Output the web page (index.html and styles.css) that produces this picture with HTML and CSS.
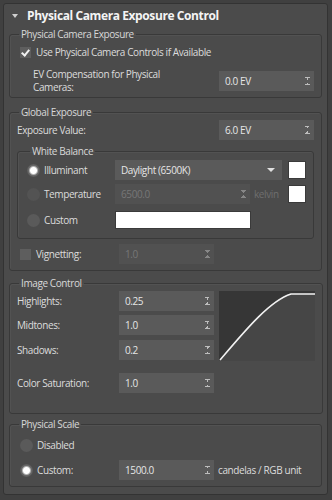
FILE: index.html
```html
<!DOCTYPE html>
<html>
<head>
    <title>Physical Camera Exposure Control</title>
    <link rel="stylesheet" href="styles.css">
</head>
<body>
    <div class="rollout">
        <div class="rollout-head">
            <span class="caret"></span>
            <span class="rollout-title">Physical Camera Exposure Control</span>
            <span class="grip"></span>
        </div>

        <div class="rollout-body">
            <!-- Physical Camera Exposure -->
            <fieldset class="group g1">
                <legend>Physical Camera Exposure</legend>
                <div class="row check-row">
                    <span class="checkbox checked"></span>
                    <span>Use Physical Camera Controls if Available</span>
                </div>
                <div class="row split ev-row">
                    <span class="two-line">EV Compensation for Physical<br>Cameras:</span>
                    <div class="spinner">0.0 EV<span class="arrows"></span></div>
                </div>
            </fieldset>

            <!-- Global Exposure -->
            <fieldset class="group g2">
                <legend>Global Exposure</legend>
                <div class="row split exp-row">
                    <span>Exposure Value:</span>
                    <div class="spinner">6.0 EV<span class="arrows"></span></div>
                </div>

                <fieldset class="group wb">
                    <legend>White Balance</legend>
                    <div class="row wb-row r1">
                        <span class="radio-label"><span class="radio on"></span>Illuminant</span>
                        <div class="dropdown">Daylight (6500K)<span class="drop-arrow"></span></div>
                        <span class="swatch"></span>
                    </div>
                    <div class="row wb-row r2">
                        <span class="radio-label"><span class="radio off"></span>Temperature</span>
                        <div class="spinner disabled temp">6500.0<span class="arrows"></span></div>
                        <span class="unit dim">kelvin</span>
                        <span class="swatch"></span>
                    </div>
                    <div class="row wb-row r3">
                        <span class="radio-label"><span class="radio"></span>Custom</span>
                        <span class="color-field"></span>
                    </div>
                </fieldset>

                <div class="row vig-row">
                    <span class="check-label"><span class="checkbox"></span>Vignetting:</span>
                    <div class="spinner small disabled">1.0<span class="arrows"></span></div>
                </div>
            </fieldset>

            <!-- Image Control -->
            <fieldset class="group g3">
                <legend>Image Control</legend>
                <div class="curve-block">
                    <div class="curve-rows">
                        <div class="row">
                            <span class="label">Highlights:</span>
                            <div class="spinner small">0.25<span class="arrows"></span></div>
                        </div>
                        <div class="row">
                            <span class="label">Midtones:</span>
                            <div class="spinner small">1.0<span class="arrows"></span></div>
                        </div>
                        <div class="row shadows">
                            <span class="label">Shadows:</span>
                            <div class="spinner small">0.2<span class="arrows"></span></div>
                        </div>
                    </div>
                    <svg class="curve" width="96" height="70" viewBox="0 0 96 70">
                        <rect x="0" y="0" width="96" height="70" fill="#464646"/>
                        <path d="M0 0 L96 0 L96 3 L72 3 C50 10 24 42 1 69 L0 69 Z" fill="#363636"/>
                        <path d="M1 69 C24 42 50 10 72 3 L96 3" fill="none" stroke="#f2f2f2" stroke-width="1.6"/>
                    </svg>
                </div>
                <div class="row sat-row">
                    <span class="label">Color Saturation:</span>
                    <div class="spinner small">1.0<span class="arrows"></span></div>
                </div>
            </fieldset>

            <!-- Physical Scale -->
            <fieldset class="group g4">
                <legend>Physical Scale</legend>
                <div class="row ps-row">
                    <span class="radio-label"><span class="radio"></span>Disabled</span>
                </div>
                <div class="row ps-row r2">
                    <span class="radio-label"><span class="radio on"></span>Custom:</span>
                    <div class="spinner small">1500.0<span class="arrows"></span></div>
                    <span class="unit">candelas / RGB unit</span>
                </div>
            </fieldset>
        </div>
    </div>
</body>
</html>
```

FILE: styles.css
```css
body {
    margin: 0;
    padding: 3px 4px 0 3px;
    background: #404040;
    font-family: 'Open Sans', sans-serif;
    font-size: 10px;
    letter-spacing: -0.4px;
    color: #dcdcdc;
}
.rollout {
    background: #4b4b4b;
    border: 1px solid #333333;
    border-radius: 3px;
    height: 492px;
    box-sizing: border-box;
}
.rollout-head {
    height: 23px;
    display: flex;
    align-items: center;
    padding: 0 9px 0 8px;
}
.caret {
    width: 0;
    height: 0;
    border-left: 3px solid transparent;
    border-right: 3px solid transparent;
    border-top: 4px solid #cfcfcf;
    margin-right: 9px;
}
.rollout-title {
    flex: 1;
    font-weight: bold;
    font-size: 12px;
    letter-spacing: -0.4px;
    color: #f4f4f4;
}
.grip {
    width: 6px;
    height: 6px;
    background-image: radial-gradient(#6c6c6c 45%, transparent 50%);
    background-size: 2px 2px;
    margin-top: 2px;
}
.rollout-body {
    padding: 0 5px;
}
.group {
    margin: 0;
    border: 1px solid #393939;
    border-radius: 3px;
    padding: 0 7px;
    box-shadow: inset 1px 1px 0 #525252;
}
.group legend {
    padding: 0 2px;
    margin-left: 2px;
    line-height: 14px;
    color: #d8d8d8;
}
.row {
    display: flex;
    align-items: center;
    height: 20px;
    white-space: nowrap;
}
.split {
    justify-content: space-between;
}
.check-row {
    height: 22px;
    padding-left: 3px;
}
.checkbox {
    position: relative;
    width: 11px;
    height: 11px;
    background: #5e5e5e;
    margin-right: 5px;
    flex: none;
}
.checkbox.checked::after {
    content: '';
    position: absolute;
    left: 3px;
    top: 1px;
    width: 3px;
    height: 6px;
    border-right: 2px solid #f2f2f2;
    border-bottom: 2px solid #f2f2f2;
    transform: rotate(40deg);
}
.ev-row {
    margin-top: 8px;
}
.two-line {
    padding-left: 16px;
    line-height: 13px;
}
.g1 {
    padding-bottom: 6px;
}
.spinner {
    position: relative;
    width: 95px;
    height: 20px;
    box-sizing: border-box;
    background: #5a5a5a;
    padding-left: 6px;
    line-height: 20px;
    color: #e6e6e6;
    flex: none;
}
.spinner.disabled {
    background: #515151;
    color: #777777;
}
.arrows {
    position: absolute;
    right: 4px;
    top: 6px;
    width: 5px;
    height: 8px;
    background:
        linear-gradient(to top right, transparent 50%, #bdbdbd 50%) 0 0 / 3px 3px no-repeat,
        linear-gradient(to top left, transparent 50%, #bdbdbd 50%) 2px 0 / 3px 3px no-repeat,
        linear-gradient(to bottom right, transparent 50%, #bdbdbd 50%) 0 5px / 3px 3px no-repeat,
        linear-gradient(to bottom left, transparent 50%, #bdbdbd 50%) 2px 5px / 3px 3px no-repeat;
}
.disabled .arrows {
    opacity: 0.5;
}
.g2 {
    margin-top: 7px;
    padding-bottom: 6px;
}
.exp-row {
    margin-top: 1px;
}
.wb {
    margin-top: 4px;
    padding: 0 7px 8px 9px;
}
.wb legend {
    margin-left: 3px;
}
.r1 {
    margin-top: 2px;
}
.wb-row.r2 {
    margin-top: 4px;
}
.wb-row.r3 {
    margin-top: 6px;
}
.radio-label {
    display: flex;
    align-items: center;
    width: 88px;
    flex: none;
}
.radio {
    width: 13px;
    height: 13px;
    border-radius: 50%;
    background: #5a5a5a;
    margin-right: 4px;
    flex: none;
}
.radio.off {
    background: #535353;
}
.radio.on {
    background: radial-gradient(circle, #ffffff 0 3px, #d9d9d9 3.5px, #6a6a6a 5px, #5a5a5a 6.5px);
}
.dropdown {
    position: relative;
    width: 167px;
    height: 20px;
    box-sizing: border-box;
    background: #5a5a5a;
    padding-left: 6px;
    line-height: 20px;
    color: #e6e6e6;
    flex: none;
}
.drop-arrow {
    position: absolute;
    right: 7px;
    top: 8px;
    border-left: 4px solid transparent;
    border-right: 4px solid transparent;
    border-top: 4px solid #e0e0e0;
}
.swatch {
    width: 18px;
    height: 18px;
    background: #ffffff;
    border: 1px solid #3a3a3a;
    box-sizing: border-box;
    margin-left: 6px;
    flex: none;
}
.spinner.temp {
    width: 135px;
}
.unit {
    margin-left: 4px;
}
.dim {
    color: #6f6f6f;
}
.wb-row .unit {
    width: 28px;
}
.color-field {
    width: 136px;
    height: 18px;
    background: #ffffff;
    border: 1px solid #3a3a3a;
    box-sizing: border-box;
}
.vig-row {
    margin-top: 5px;
}
.check-label {
    display: flex;
    align-items: center;
    width: 102px;
    padding-left: 3px;
    box-sizing: border-box;
    flex: none;
}
.spinner.small {
    width: 95px;
}
.g3 {
    margin-top: 5px;
    padding-bottom: 20px;
}
.curve-block {
    display: flex;
    margin-top: 1px;
}
.curve-rows {
    display: flex;
    flex-direction: column;
    gap: 4px;
}
.curve-rows .shadows {
    margin-top: 1px;
}
.label {
    width: 102px;
    flex: none;
}
.curve {
    margin-left: 5px;
    display: block;
}
.sat-row {
    margin-top: 12px;
}
.g4 {
    margin-top: 3px;
    padding-bottom: 6px;
}
.ps-row {
    margin-top: 4px;
}
.ps-row .radio-label {
    width: 99px;
    padding-left: 3px;
}
.ps-row.r2 {
    margin-top: 5px;
}
```
